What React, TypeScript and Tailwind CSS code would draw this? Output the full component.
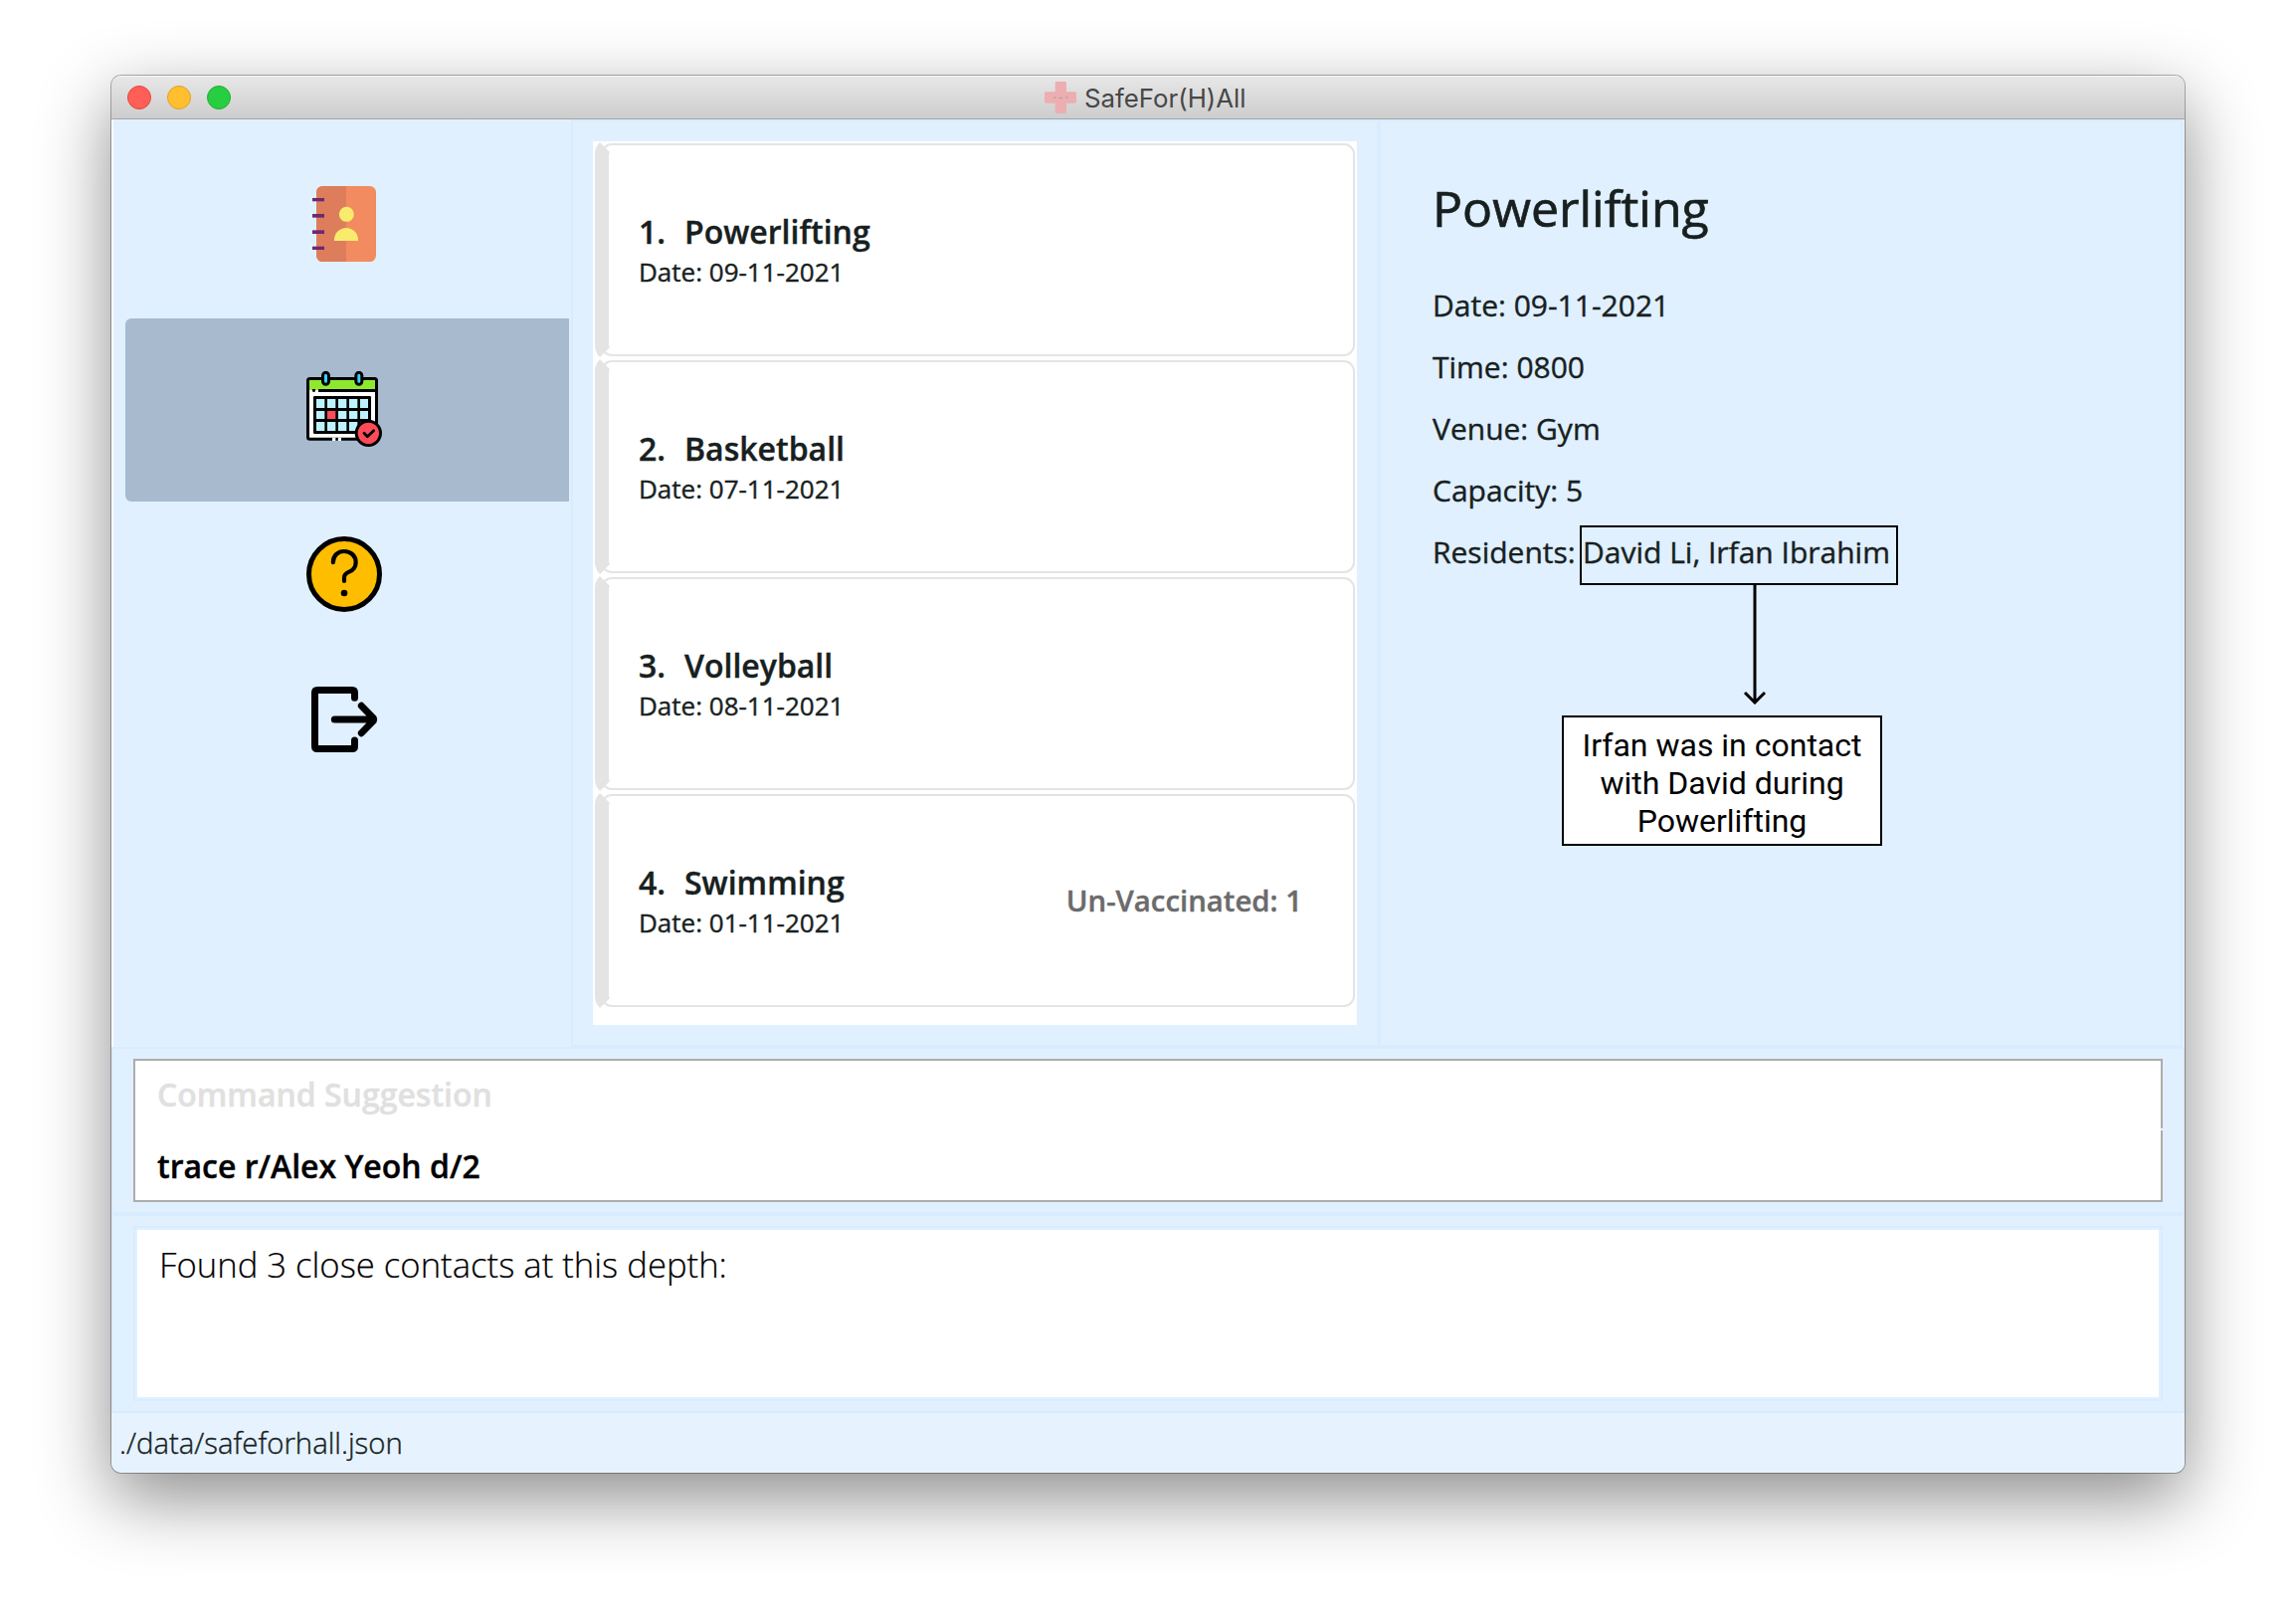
import React from "react";

const OPEN_SANS = "font-['Open_Sans','Noto_Sans',sans-serif]";

type EventItem = { name: string; date: string; note?: string };

const events: EventItem[] = [
  { name: "Powerlifting", date: "09-11-2021" },
  { name: "Basketball", date: "07-11-2021" },
  { name: "Volleyball", date: "08-11-2021" },
  { name: "Swimming", date: "01-11-2021", note: "Un-Vaccinated: 1" },
];

function ContactsIcon() {
  return (
    <svg viewBox="54 81 228 228" className="size-[76px]">
      <rect x="84" y="81" width="180" height="228" rx="19" fill="#f28b5f" />
      <path d="M103 81H174V309H103A19 19 0 0 1 84 290V100A19 19 0 0 1 103 81Z" fill="#de7d5c" />
      <g fill="#6b2a70">
        <rect x="72" y="117" width="36" height="10" />
        <rect x="72" y="165" width="36" height="11" />
        <rect x="72" y="214" width="36" height="11" />
        <rect x="72" y="263" width="36" height="10" />
      </g>
      <circle cx="175" cy="166" r="22.5" fill="#f9ec6d" />
      <path d="M138 246V243A36 36 0 0 1 210 243V246Z" fill="#f9ec6d" />
    </svg>
  );
}

function CalendarIcon() {
  const columns = [84, 117, 150, 183, 216];
  const rows = [153, 189, 222];
  return (
    <svg viewBox="54 69 228 228" className="mb-0.5 size-[76px]">
      <rect x="58.5" y="91.5" width="207" height="182" rx="6" fill="#fff" stroke="#000" strokeWidth="9" />
      <rect x="63" y="96" width="198" height="30" fill="#8ee830" />
      <path d="M90 127.500H264" stroke="#000" strokeWidth="9" />
      <path d="M72 123H81V127L79 132H74L72 127Z" fill="#000" />
      <rect x="75" y="144" width="174" height="114" rx="4" fill="#000" />
      {rows.map((y, r) =>
        columns.map((x, c) => (
          <rect
            key={`${r}-${c}`}
            x={x}
            y={y}
            width={c === 4 ? 24 : 25}
            height={r === 1 ? 24 : 27}
            fill={r === 1 && c === 1 ? "#ff4b58" : "#bdf2ff"}
          />
        )),
      )}
      <path d="M132 274H142M149.500 274H159" stroke="#fff" strokeWidth="9.500" />
      <rect x="103.500" y="73" width="18" height="36" rx="9" fill="#3fd0fb" stroke="#000" strokeWidth="9" />
      <rect x="203.500" y="73" width="18" height="36" rx="9" fill="#3fd0fb" stroke="#000" strokeWidth="9" />
      <circle cx="241" cy="256" r="36.500" fill="#ff4b58" stroke="#000" strokeWidth="9" />
      <path d="M228 256L238 266L257 248" fill="none" stroke="#000" strokeWidth="8.500" strokeLinecap="round" strokeLinejoin="round" />
    </svg>
  );
}

function HelpIcon() {
  return (
    <svg viewBox="54 57 228 228" className="size-[76px]">
      <circle cx="168" cy="171" r="106.500" fill="#ffbd00" stroke="#000" strokeWidth="15" />
      <path
        d="M134.500 135.500C134.500 114 150 102 168 102C188 102 203 116 203 135C203 149 195 159 183 164C173 168 168 172 168 181V192"
        fill="none"
        stroke="#000"
        strokeWidth="12.500"
        strokeLinecap="round"
      />
      <circle cx="168" cy="228" r="10" fill="#000" />
    </svg>
  );
}

function ExitIcon() {
  return (
    <svg
      viewBox="54 495 228 228"
      className="size-[76px]"
      fill="none"
      stroke="#000"
      strokeWidth="21"
      strokeLinecap="round"
      strokeLinejoin="round"
    >
      <path d="M199.500 544V528Q199.500 520.500 192 520.500H87Q79.500 520.500 79.500 528V690Q79.500 697.500 87 697.500H192Q199.500 697.500 199.500 690V672" />
      <path d="M139 609H256M220 568L256 605Q258 609 256 613L220 650" />
    </svg>
  );
}

function MedicalCross() {
  return (
    <svg viewBox="0 0 96 96" className="size-8">
      <path d="M36 0H62Q66 0 66 4V31H92Q96 31 96 35V61Q96 65 92 65H66V92Q66 96 62 96H36Q32 96 32 92V65H4Q0 65 0 61V35Q0 31 4 31H32V4Q32 0 36 0Z" fill="#ecaeb0" />
      <path d="M43 48Q48 53 54 48" fill="none" stroke="#999" strokeWidth="2.500" />
      <circle cx="31" cy="48" r="2.500" fill="#999" />
      <circle cx="67" cy="48" r="2.500" fill="#999" />
    </svg>
  );
}

function NavItem({ className, children }: { className: string; children: React.ReactNode }) {
  return <button className={`flex w-[446px] items-center justify-center rounded-l-[6px] pr-1.5 ${className}`}>{children}</button>;
}

function EventCard({ index, event }: { index: number; event: EventItem }) {
  return (
    <li className="flex h-[214px] [-webkit-text-stroke:0.4px]">
      <svg viewBox="0 0 16 216" className="z-10 -my-px h-[216px] w-4 shrink-0" fill="#e4e4e4">
        <path d="M5 0L15 10L14 12V204L15 206L5 216Q0 211 0 204V12Q0 5 5 0Z" />
      </svg>
      <div className="-ml-2.5 flex grow justify-between rounded-[11px] border-2 border-[#e4e4e4] bg-white pr-[51px] pl-[36px]">
        <div className="pt-[65px] text-[#181f1f]">
          <h2 className="flex text-[32px] leading-[44px] font-semibold">
            <span className="w-[46px]">{index}.</span>
            {event.name}
          </h2>
          <p className="text-[26px] leading-[36px]">Date: {event.date}</p>
        </div>
        {event.note && <p className="pt-[84px] text-[29.33px] leading-[42px] font-semibold text-[#6b6b6b]">{event.note}</p>}
      </div>
    </li>
  );
}

function TitleBar() {
  return (
    <header className="flex h-11 shrink-0 items-center rounded-t-[10px] border-t border-b border-t-[#f6f6f6] border-b-[#a3a6a8] bg-linear-to-b from-[#e7e7e7] to-[#cdcdcd] pl-4">
      <div className="flex gap-4">
        <span className="size-6 rounded-full border border-[#e2463f] bg-[#ff5f57]" />
        <span className="size-6 rounded-full border border-[#e0a028] bg-[#ffbf2e]" />
        <span className="size-6 rounded-full border border-[#1dad2c] bg-[#28ce41]" />
      </div>
      <div className="ml-[818px] flex items-center gap-2">
        <MedicalCross />
        <h1 className="pt-0.5 font-['Inter',sans-serif] text-[25.8px] leading-8 text-[#474747]">SafeFor(H)All</h1>
      </div>
    </header>
  );
}

function EventDetails() {
  return (
    <section className="w-[808px] border-2 border-[#d9ecff] pt-[51px] pl-[52px] text-[#181f1f]">
      <h2 className="text-[50px] leading-[72px] [-webkit-text-stroke:0.7px]">Powerlifting</h2>
      <div className="mt-[31px] text-[30px] leading-[62px] [-webkit-text-stroke:0.4px]">
        <p>Date: 09-11-2021</p>
        <p>Time: 0800</p>
        <p>Venue: Gym</p>
        <p>Capacity: 5</p>
        <div className="flex">
          <span className="w-[148px]">Residents:</span>
          <div className="relative mt-1 h-[60px] w-[320px] border-2 border-black pl-px leading-[50px]">
            David Li, Irfan Ibrahim
            <svg viewBox="0 0 24 121" className="absolute top-[57px] left-[162px] h-[121px] w-6" fill="none" stroke="#000" strokeWidth="3">
              <path d="M12 0V119M2 109L12 119L22 109" />
            </svg>
            <p className="absolute top-[189px] -left-5 w-[322px] border-2 border-black bg-white px-4 pt-[9px] pb-1 text-center font-['Roboto',sans-serif] text-[32px] leading-[38px] text-black [-webkit-text-stroke:0px]">
              Irfan was in contact with David during Powerlifting
            </p>
          </div>
        </div>
      </div>
    </section>
  );
}

export default function App() {
  return (
    <div className={`h-[1628px] w-[2308px] overflow-hidden bg-white pt-[76px] pl-28 ${OPEN_SANS}`}>
      <main className="flex h-[1404px] w-[2084px] flex-col rounded-[10px] bg-[#e0f0ff] shadow-[0_0_0_1px_rgba(0,0,0,0.3),0_25px_72px_rgba(0,0,0,0.46)]">
        <TitleBar />
        <div className="flex h-[932px] border-l-2 border-l-white">
          <nav className="flex w-[460px] flex-col pt-2.5 pl-3">
            <NavItem className="h-[190px]"><ContactsIcon /></NavItem>
            <NavItem className="h-[184px] bg-[#a8bace]"><CalendarIcon /></NavItem>
            <NavItem className="h-[146px]"><HelpIcon /></NavItem>
            <NavItem className="h-[146px]"><ExitIcon /></NavItem>
          </nav>
          <section className="w-[812px] border-2 border-[#d9ecff] px-5 py-5">
            <ul className="flex h-[888px] flex-col gap-1 bg-white p-0.5">
              {events.map((event, i) => (
                <EventCard key={event.name} index={i + 1} event={event} />
              ))}
            </ul>
          </section>
          <EventDetails />
        </div>
        <section className="h-[168px] border-2 border-[#d9ecff] px-5 pt-2.5">
          <div className="flex h-36 border-2 border-r-0 border-[#acacac] bg-white text-[32px] font-semibold">
            <div className="grow pl-[22px] [-webkit-text-stroke:0.4px]">
              <p className="h-[70px] pt-3 leading-[44px] text-[#e0e0e0]">Command Suggestion</p>
              <p className="pt-[14px] leading-[44px] text-black">trace r/Alex Yeoh d/2</p>
            </div>
            <div className="flex w-0.5 flex-col gap-0.5">
              <span className="h-[68px] bg-[#acacac]" />
              <span className="grow bg-[#acacac]" />
            </div>
          </div>
        </section>
        <section className="h-[200px] border-2 border-[#d9ecff] px-5 pt-2.5">
          <div className="h-44 border-2 border-[#d9ecff] p-0.5">
            <p className="h-[168px] bg-white pt-[10px] pl-[22px] text-[34.67px] leading-[50px] font-light text-black [-webkit-text-stroke:0.2px]">
              Found 3 close contacts at this depth:
            </p>
          </div>
        </section>
        <footer className="grow rounded-b-[10px] bg-[#e6f3ff] pt-[9px] pl-2 text-[29.33px] leading-[42px] font-light text-[#181f1f] [-webkit-text-stroke:0.4px]">
          ./data/safeforhall.json
        </footer>
      </main>
    </div>
  );
}
